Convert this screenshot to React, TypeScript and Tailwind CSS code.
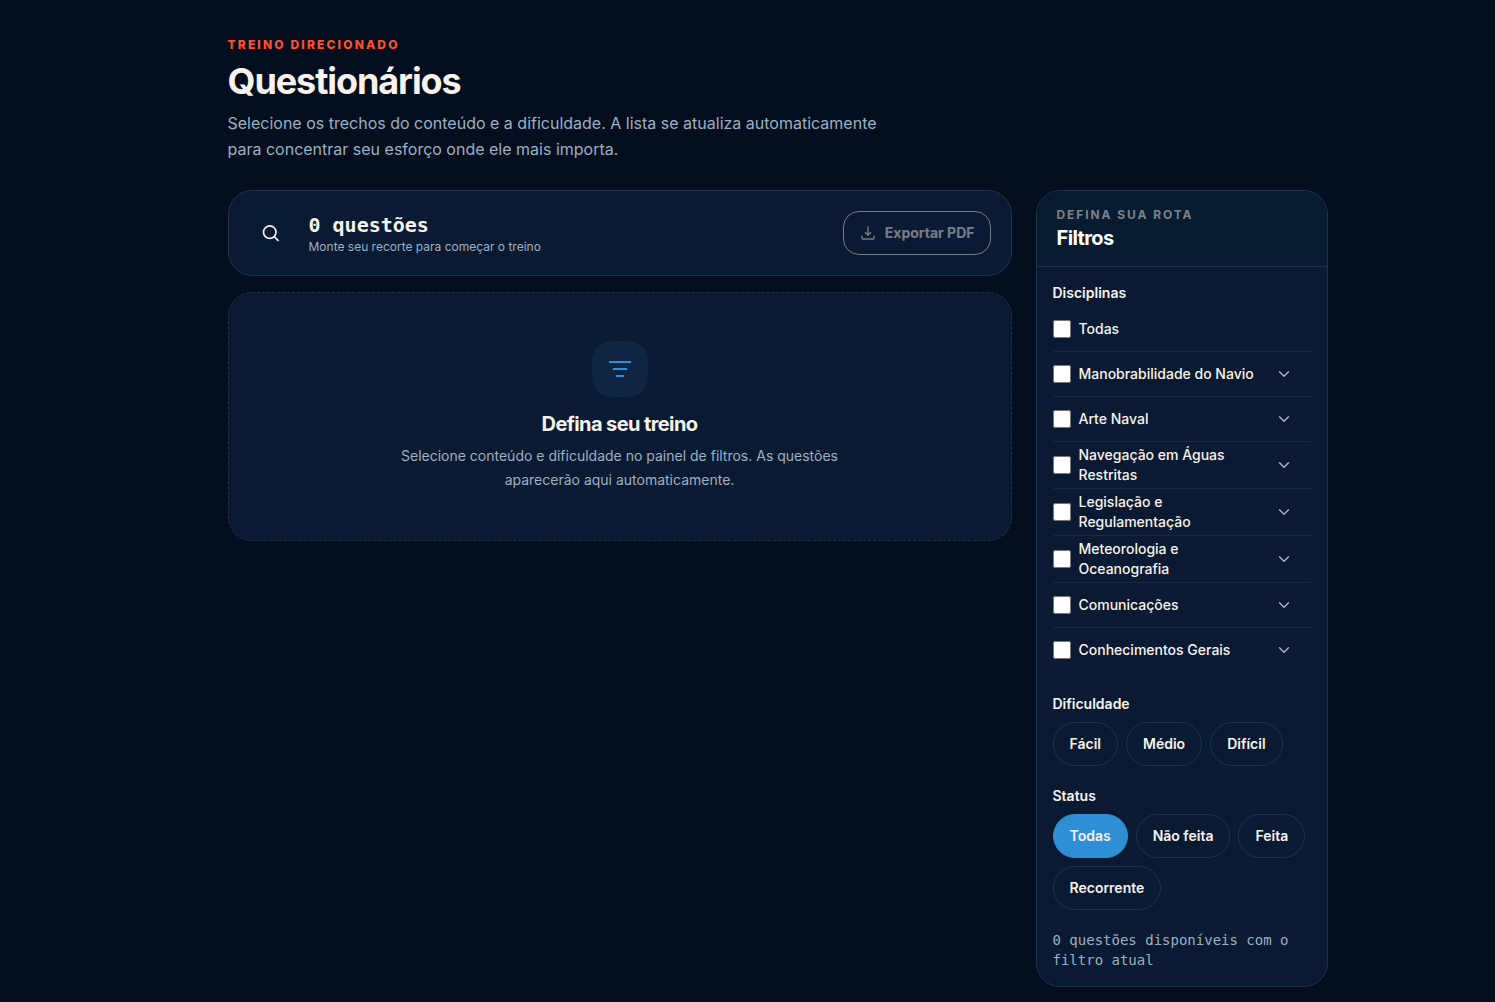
import React, { useState } from 'react';
import { ChevronDown } from 'lucide-react';

const subjects = [
    'Manobrabilidade do Navio',
    'Arte Naval',
    'Navegação em Águas Restritas',
    'Legislação e Regulamentação',
    'Meteorologia e Oceanografia',
    'Comunicações',
    'Conhecimentos Gerais',
];

const difficulties = ['Fácil', 'Médio', 'Difícil'];
const statuses = ['Todas', 'Não feita', 'Feita', 'Recorrente'];

const SearchIcon: React.FC = () => (
    <svg width="20" height="20" viewBox="0 0 24 24" fill="none" stroke="currentColor" strokeWidth="2" aria-hidden="true">
        <circle cx="10.5" cy="11" r="7.5" />
        <path d="m16 16.5 5 5" />
    </svg>
);

const DownloadIcon: React.FC = () => (
    <svg
        width="18"
        height="18"
        viewBox="0 0 24 24"
        fill="none"
        stroke="currentColor"
        strokeWidth="1.8"
        strokeLinejoin="round"
        aria-hidden="true"
    >
        <path d="M12 3v12M8 11l4 4 4-4M4 15.5V19a1 1 0 0 0 1 1h14a1 1 0 0 0 1-1v-3.5" />
    </svg>
);

const FilterLines: React.FC = () => (
    <svg width="24" height="24" viewBox="0 0 24 24" fill="none" stroke="currentColor" strokeWidth="2" aria-hidden="true">
        <path d="M1 5h22M5 12h14M8 19h8" />
    </svg>
);

interface ChipProps {
    label: string;
    active: boolean;
    onClick: () => void;
}

const Chip: React.FC<ChipProps> = ({ label, active, onClick }) => (
    <button
        type="button"
        aria-pressed={active}
        onClick={onClick}
        className={`h-11 rounded-full border px-4 text-sm font-semibold 
            ${active ? 'border-[#2f8fd5] bg-[#2f8fd5] text-[#f7f3ec]' : 'border-[#20324a] text-[#f7f3ec] hover:border-[#2f8fd5]'}`}
    >
        {label}
    </button>
);

interface CheckRowProps {
    label: string;
    checked: boolean;
    onChange: () => void;
    expandable?: boolean;
    last?: boolean;
}

const CheckRow: React.FC<CheckRowProps> = ({ label, checked, onChange, expandable, last }) => (
    <li className={`flex items-center ${last ? '' : 'border-b border-[#182a42]'}`}>
        <label className="flex min-h-11 flex-1 items-center gap-2 py-[3px] text-sm leading-5 font-medium text-[#f7f3ec]">
            <input type="checkbox" checked={checked} onChange={onChange} className="size-[18px] shrink-0" />
            <span>{label}</span>
        </label>
        {expandable && (
            <button
                type="button"
                aria-label={`Expandir ${label}`}
                className="mr-[5px] flex h-11 w-11 shrink-0 items-center justify-center text-[#a3b3c2]"
            >
                <ChevronDown size={18} />
            </button>
        )}
    </li>
);

const App: React.FC = () => {
    const [selected, setSelected] = useState<string[]>([]);
    const [difficulty, setDifficulty] = useState<string[]>([]);
    const [status, setStatus] = useState('Todas');

    const toggle = (list: string[], value: string) =>
        list.includes(value) ? list.filter((item) => item !== value) : [...list, value];

    const allSelected = selected.length === subjects.length;

    return (
        <div className="min-h-screen bg-[#040e1e] pl-[60px] font-['Inter',sans-serif] text-[#f7f3ec]">
            <main className="mx-auto max-w-[1100px] pt-9 pb-[15px]">
                <header className="mb-7">
                    <p className="text-xs leading-[18px] font-extrabold tracking-[0.18em] text-[#ff5130] uppercase">
                        Treino direcionado
                    </p>
                    <h1 className="mt-[7px] text-4xl leading-10 font-bold tracking-[-0.03em]">Questionários</h1>
                    <p className="mt-[9px] max-w-[680px] text-base leading-[26px] text-[#9db0c2]">
                        Selecione os trechos do conteúdo e a dificuldade. A lista se atualiza automaticamente para concentrar seu
                        esforço onde ele mais importa.
                    </p>
                </header>

                <div className="grid grid-cols-[minmax(0,1fr)_292px] items-start gap-6">
                    <div className="space-y-4">
                        {/* Summary bar */}
                        <section className="flex items-center gap-4 rounded-3xl border border-[#20324a] bg-[#0a1a33] p-5">
                            <div className="flex h-11 w-11 items-center justify-center rounded-2xl bg-[#081b32]">
                                <SearchIcon />
                            </div>
                            <div className="flex-1 pt-1">
                                <p className="font-['DejaVu_Sans_Mono',monospace] text-xl leading-5 font-bold">0 questões</p>
                                <p className="mt-1 text-xs leading-4 text-[#9db0c2]">Monte seu recorte para começar o treino</p>
                            </div>
                            <button
                                type="button"
                                disabled
                                className="flex h-11 items-center gap-2 rounded-2xl border border-[#f7f3ec] px-[15px] text-sm font-bold opacity-45"
                            >
                                <DownloadIcon />
                                Exportar PDF
                            </button>
                        </section>

                        {/* Empty state */}
                        <section className="flex flex-col items-center rounded-3xl border border-dashed border-[#20324a] bg-[#0a1a33] p-12 text-center">
                            <div className="flex h-14 w-14 items-center justify-center rounded-[20px] bg-[#0e2543] text-[#2f8fd5]">
                                <FilterLines />
                            </div>
                            <h2 className="mt-[15px] text-xl leading-6 font-bold tracking-[-0.03em]">Defina seu treino</h2>
                            <p className="mt-2 max-w-[460px] text-sm leading-6 text-[#9db0c2]">
                                Selecione conteúdo e dificuldade no painel de filtros. As questões aparecerão aqui automaticamente.
                            </p>
                        </section>
                    </div>

                    <aside className="overflow-hidden rounded-3xl border border-[#20324a] bg-[#0a1a33]">
                        <div className="border-b border-[#20324a] bg-[#071b31] px-5 pt-4 pb-3">
                            <p className="text-xs leading-4 font-bold tracking-[0.16em] text-[#7d828b] uppercase">Defina sua rota</p>
                            <h2 className="pb-px text-xl leading-[30px] font-bold tracking-[-0.03em] text-white">Filtros</h2>
                        </div>

                        <div className="space-y-5 p-4">
                            <fieldset className="pb-0.5">
                                <legend className="mb-1 text-sm leading-5 font-semibold">Disciplinas</legend>
                                <ul>
                                    <CheckRow
                                        label="Todas"
                                        checked={allSelected}
                                        onChange={() => setSelected(allSelected ? [] : subjects)}
                                    />
                                    {subjects.map((subject, index) => (
                                        <CheckRow
                                            key={subject}
                                            label={subject}
                                            checked={selected.includes(subject)}
                                            onChange={() => setSelected(toggle(selected, subject))}
                                            expandable
                                            last={index === subjects.length - 1}
                                        />
                                    ))}
                                </ul>
                            </fieldset>

                            <fieldset>
                                <legend className="mb-2 text-sm leading-5 font-semibold">Dificuldade</legend>
                                <div className="flex flex-wrap gap-2">
                                    {difficulties.map((level) => (
                                        <Chip
                                            key={level}
                                            label={level}
                                            active={difficulty.includes(level)}
                                            onClick={() => setDifficulty(toggle(difficulty, level))}
                                        />
                                    ))}
                                </div>
                            </fieldset>

                            <fieldset>
                                <legend className="mb-2 text-sm leading-5 font-semibold">Status</legend>
                                <div className="flex flex-wrap gap-2">
                                    {statuses.map((item) => (
                                        <Chip key={item} label={item} active={status === item} onClick={() => setStatus(item)} />
                                    ))}
                                </div>
                            </fieldset>

                            <p className="font-['DejaVu_Sans_Mono',monospace] text-sm leading-5 text-[#9db0c2]">
                                0 questões disponíveis com o filtro atual
                            </p>
                        </div>
                    </aside>
                </div>
            </main>
        </div>
    );
};

export default App;
